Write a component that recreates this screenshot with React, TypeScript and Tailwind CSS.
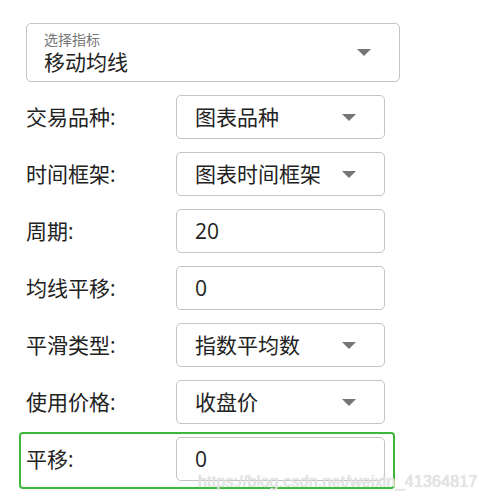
const rows: { label: string; value: string; select: boolean }[] = [
  { label: '交易品种:', value: '图表品种', select: true },
  { label: '时间框架:', value: '图表时间框架', select: true },
  { label: '周期:', value: '20', select: false },
  { label: '均线平移:', value: '0', select: false },
  { label: '平滑类型:', value: '指数平均数', select: true },
  { label: '使用价格:', value: '收盘价', select: true },
];

function Caret() {
  return (
    <svg width="14" height="7" viewBox="0 0 14 7" className="shrink-0">
      <path d="M0 0h14L7 7z" fill="#757575" />
    </svg>
  );
}

function Field({ label, value, select }: { label: string; value: string; select: boolean }) {
  return (
    <div className="flex items-center h-[44px]">
      <span className="w-[150px] shrink-0 text-[21px] leading-none text-[#222]">{label}</span>
      <div className="w-[209px] h-[44px] flex items-center border border-[#c4c4c4] rounded-[5px] pl-[18px] pr-[28px] bg-white">
        <span className="flex-1 text-[21px] leading-none text-[#222]">{value}</span>
        {select && <Caret />}
      </div>
    </div>
  );
}

export default function App() {
  return (
    <div
      className="relative w-[479px] h-[503px] bg-white overflow-hidden px-[26px] pt-[23px]"
      style={{ fontFamily: '"Open Sans", "Noto Sans CJK SC", sans-serif' }}
    >
      <div className="w-[374px] h-[59px] flex items-center border border-[#c4c4c4] rounded-[5px] pl-[17px] pr-[28px]">
        <div className="flex-1 flex flex-col gap-[3px]">
          <span className="text-[14px] leading-[16px] text-[#757575]">选择指标</span>
          <span className="text-[21px] leading-[23px] text-[#222]">移动均线</span>
        </div>
        <Caret />
      </div>

      <div className="flex flex-col gap-[13px] mt-[13px]">
        {rows.map(r => (
          <Field key={r.label} {...r} />
        ))}
      </div>

      <div className="mt-[8px] -ml-[7px] w-[376px] border-2 border-[#3cb93c] rounded-[4px] pl-[5px] pt-[3px] pb-[6px]">
        <Field label="平移:" value="0" select={false} />
      </div>

      <span className="absolute left-[198px] top-[474px] text-[16px] leading-none text-[#e6e6e6] tracking-[0.2px]" style={{ fontFamily: '"Liberation Sans", sans-serif', textShadow: '0 0 1px #c4c4c4' }}>
        https://blog.csdn.net/weixin_41364817
      </span>
    </div>
  );
}
